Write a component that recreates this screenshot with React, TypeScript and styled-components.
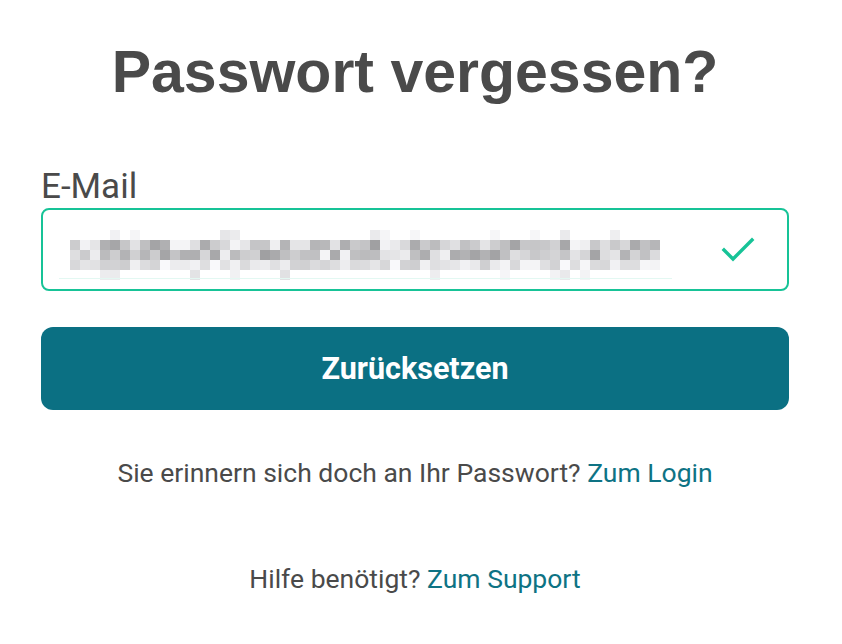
import React from 'react';
import styled, { createGlobalStyle } from 'styled-components';

const GlobalStyle = createGlobalStyle`
  html, body {
    margin: 0;
    padding: 0;
    background: #ffffff;
  }
  body {
    font-family: Roboto, "Liberation Sans", sans-serif;
    color: #4a4a4a;
  }
`;

// pixelated (censored) e-mail address, drawn as a mosaic
const rand = (seed: number) => {
  let s = seed;
  return () => {
    s = (s * 16807) % 2147483647;
    return (s - 1) / 2147483646;
  };
};

const EmailMosaic = () => {
  const r = rand(42);
  const cols = 59;
  const cells: React.ReactNode[] = [];
  for (let c = 0; c < cols; c++) {
    for (let row = 0; row < 5; row++) {
      const v = r();
      let shade: number;
      if (row === 0 || row === 4) {
        if (v < 0.72) continue;
        shade = 225 + Math.floor(r() * 22);
      } else if (row === 3) {
        shade = 205 + Math.floor(v * 45);
      } else {
        shade = 160 + Math.floor(v * 85);
      }
      cells.push(
        <rect
          key={`${c}-${row}`}
          x={c * 10}
          y={row * 10}
          width={10}
          height={10}
          fill={`rgb(${shade},${shade},${shade + 2})`}
        />
      );
    }
  }
  return (
    <svg width={590} height={50} viewBox="0 0 590 50">
      {cells}
    </svg>
  );
};

const App = () => {
  return (
    <>
      <GlobalStyle />
      <Page>
        <Title>Passwort vergessen?</Title>
        <Label>E-Mail</Label>
        <InputBox>
          <Masked>
            <EmailMosaic />
            <Underline />
          </Masked>
          <svg width="34" height="28" viewBox="0 0 34 28">
            <polyline
              points="3,14 12,23 31,4"
              fill="none"
              stroke="#17c397"
              strokeWidth="3.4"
              strokeLinecap="square"
            />
          </svg>
        </InputBox>
        <SubmitButton>Zurücksetzen</SubmitButton>
        <Hint>
          Sie erinnern sich doch an Ihr Passwort? <LinkText>Zum Login</LinkText>
        </Hint>
        <Hint $top={74}>
          Hilfe benötigt? <LinkText>Zum Support</LinkText>
        </Hint>
      </Page>
    </>
  );
};

const Page = styled.div`
  width: 748px;
  padding: 40px 53px 0 41px;
  display: flex;
  flex-direction: column;
`;

const Title = styled.h1`
  margin: 0;
  font-family: "Liberation Sans", Arial, sans-serif;
  font-weight: 700;
  font-size: 59px;
  line-height: 64px;
  color: #4a4a4a;
  text-align: center;
`;

const Label = styled.label`
  margin-top: 63px;
  font-size: 35px;
  line-height: 40px;
  color: #4a4a4a;
`;

const InputBox = styled.div`
  margin-top: 1px;
  height: 83px;
  box-sizing: border-box;
  border: 2px solid #17c397;
  border-radius: 8px;
  display: flex;
  align-items: center;
  justify-content: space-between;
  padding: 0 32px 0 27px;
`;

const Masked = styled.div`
  position: relative;
  display: flex;
  flex-direction: column;
  margin-top: 10px;

  svg {
    display: block;
  }
`;

const Underline = styled.div`
  position: absolute;
  left: -11px;
  right: -12px;
  bottom: 1px;
  height: 1px;
  background: #e3f8f2;
`;

const SubmitButton = styled.button`
  margin-top: 36px;
  height: 83px;
  border: none;
  border-radius: 12px;
  background: #0b7083;
  color: #ffffff;
  font-family: Roboto, sans-serif;
  font-weight: 700;
  font-size: 30.5px;
  cursor: pointer;
`;

const Hint = styled.p<{ $top?: number }>`
  margin: ${(p) => p.$top ?? 47}px 0 0;
  font-size: 26.5px;
  line-height: 32px;
  text-align: center;
  color: #4a4a4a;
`;

const LinkText = styled.a`
  color: #0e7384;
  text-decoration: none;
  cursor: pointer;
`;

export default App;
